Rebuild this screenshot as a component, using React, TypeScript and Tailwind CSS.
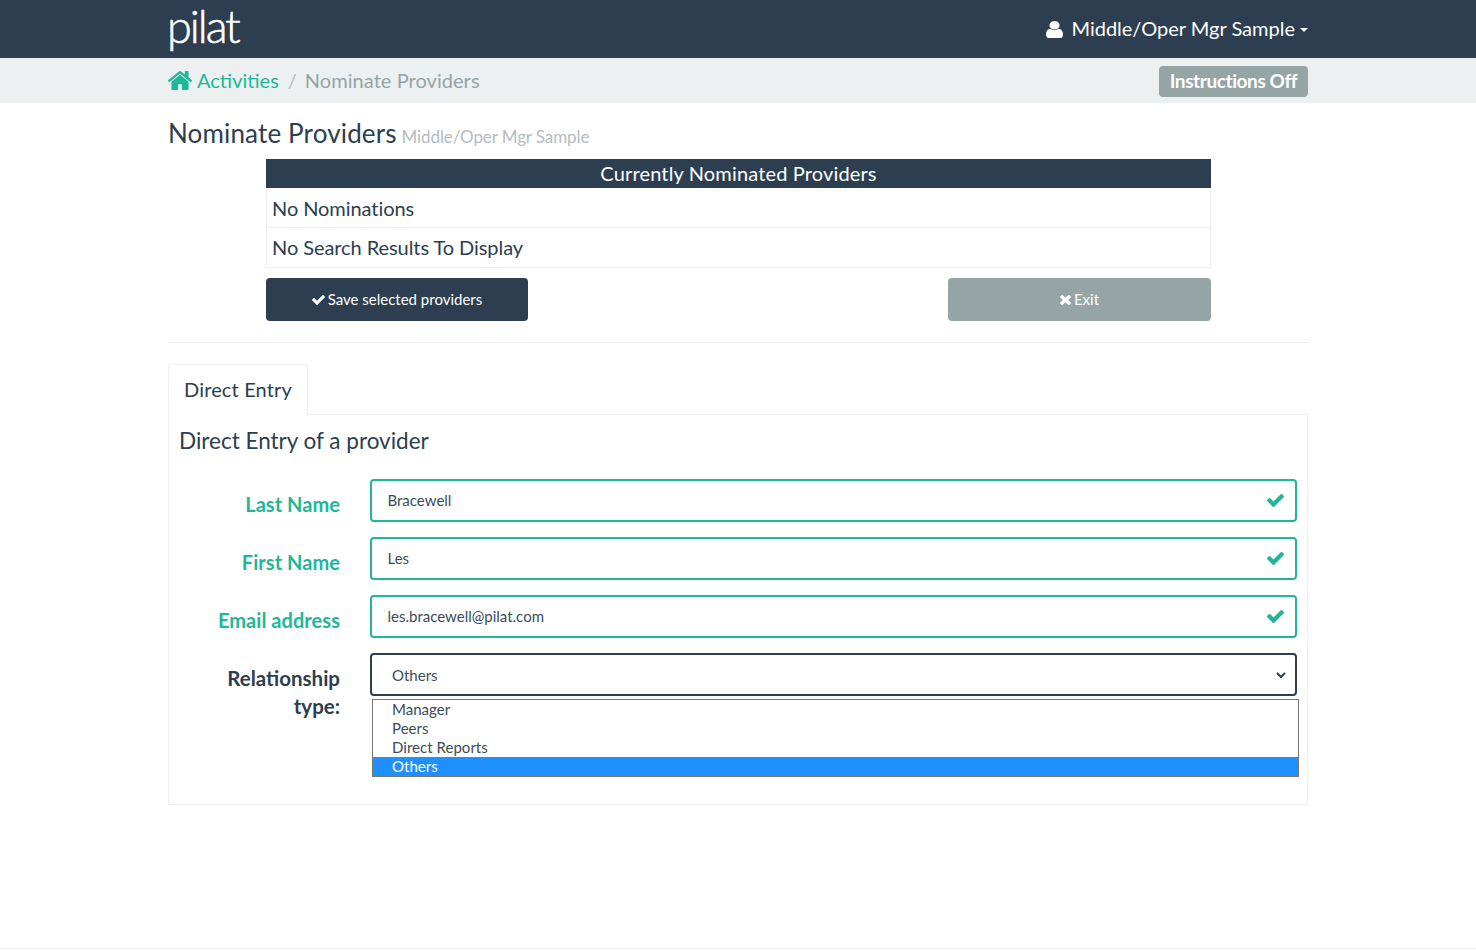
const fields = [
  { label: "Last Name", value: "Bracewell" },
  { label: "First Name", value: "Les" },
  { label: "Email address", value: "les.bracewell@pilat.com" },
]

const options = ["Manager", "Peers", "Direct Reports", "Others"]

function CheckIcon({ className }: { className: string }) {
  return (
    <svg className={className} viewBox="121 334 1550 1188" preserveAspectRatio="none" fill="currentColor">
      <path d="M1671 566q0 40-28 68l-724 724-136 136q-28 28-68 28t-68-28l-136-136-362-362q-28-28-28-68t28-68l136-136q28-28 68-28t68 28l294 295 656-657q28-28 68-28t68 28l136 136q28 28 28 68z" />
    </svg>
  )
}

function TimesIcon({ className }: { className: string }) {
  return (
    <svg className={className} viewBox="302 366 1188 1188" preserveAspectRatio="none" fill="currentColor">
      <path d="M1490 1322q0 40-28 68l-136 136q-28 28-68 28t-68-28l-294-294-294 294q-28 28-68 28t-68-28l-136-136q-28-28-28-68t28-68l294-294-294-294q-28-28-28-68t28-68l136-136q28-28 68-28t68 28l294 294 294-294q28-28 68-28t68 28l136 136q28 28 28 68t-28 68l-294 294 294 294q28 28 28 68z" />
    </svg>
  )
}

function UserIcon({ className }: { className: string }) {
  return (
    <svg className={className} viewBox="256 128 1280 1536" preserveAspectRatio="none" fill="currentColor">
      <path d="M1536 1399q0 109-62.5 187t-150.5 78h-854q-88 0-150.5-78t-62.5-187q0-85 8.5-160.5t31.5-152 58.5-131 94-89 134.5-34.5q131 128 313 128t313-128q76 0 134.5 34.5t94 89 58.5 131 31.5 152 8.5 160.5zm-256-887q0 159-112.5 271.5t-271.5 112.5-271.5-112.5-112.5-271.5 112.5-271.5 271.5-112.5 271.5 112.5 112.5 271.5z" />
    </svg>
  )
}

function HomeIcon({ className }: { className: string }) {
  return (
    <svg className={className} viewBox="90 253 1612 1283" preserveAspectRatio="none" fill="currentColor">
      <path d="M1472 992v480q0 26-19 45t-45 19h-384v-384h-256v384h-384q-26 0-45-19t-19-45v-480q0-1 .5-3t.5-3l575-474 575 474q1 2 1 6zm223-69l-62 74q-8 9-21 11h-3q-13 0-21-7l-692-577-692 577q-12 8-24 7-13-2-21-11l-62-74q-8-10-7-23.5t11-21.5l719-599q32-26 76-26t76 26l244 204v-195q0-14 9-23t23-9h192q14 0 23 9t9 23v408l219 182q10 8 11 21.5t-7 23.5z" />
    </svg>
  )
}

function Field({ label, value }: { label: string; value: string }) {
  return (
    <div className="flex mb-[15px]">
      <label className="w-[161px] pt-[10px] mr-[30px] text-right text-[20px] leading-[30px] font-bold text-[#1fb799] tracking-[0.05px]">
        {label}
      </label>
      <div className="w-[927px] h-[43px] rounded-[4px] border-2 border-[#1fb799] flex items-center justify-between pl-[15.5px] pr-[11px] text-[15px] text-[#3b4b5b]">
        <span>{value}</span>
        <CheckIcon className="w-[17px] h-[13px] text-[#1fb799]" />
      </div>
    </div>
  )
}

export default function App() {
  return (
    <div className="min-h-[950px] bg-white text-[#2c3e50] font-['Lato','Liberation_Sans',sans-serif] flex flex-col">
      <nav className="h-[58px] bg-[#2c3e50] text-white">
        <div className="w-[1140px] mx-auto h-full flex items-center justify-between">
          <span className="text-[45px] font-light leading-none tracking-[-2px] -mt-[5px] -ml-[1px] [-webkit-text-stroke:0.6px_white]">pilat</span>
          <div className="flex items-center text-[20px]">
            <UserIcon className="w-[17px] h-[17px] mr-[8px]" />
            <span className="pb-[2px]">Middle/Oper Mgr Sample</span>
            <span className="ml-[5px] mt-[2px] border-x-[4px] border-t-[4px] border-x-transparent border-t-white" />
          </div>
        </div>
      </nav>

      <div className="h-[45px] bg-[#ecf0f1]">
        <div className="w-[1140px] mx-auto h-full flex items-center justify-between">
          <div className="flex items-center text-[20px]">
            <HomeIcon className="w-[24px] h-[19px] mr-[5px] text-[#1fb799]" />
            <span className="pb-[2px] text-[#1fb799]">Activities</span>
            <span className="pb-[2px] text-[#b4bcc2] ml-[9px] mr-[8px]">/</span>
            <span className="pb-[2px] text-[#95a5a6] tracking-[0.05px]">Nominate Providers</span>
          </div>
          <button className="mt-[1px] w-[149px] h-[31px] rounded-[4px] bg-[#95a5a6] text-white text-[19px] font-bold tracking-[-0.4px]">
            Instructions Off
          </button>
        </div>
      </div>

      <main className="w-[1140px] mx-auto">
        <h1 className="mt-[12px] h-[44px] text-[26px] leading-[36px] tracking-[0.15px]">
          Nominate Providers <small className="-ml-[2px] text-[17px] text-[#b4bcc2] tracking-[-0.1px]">Middle/Oper Mgr Sample</small>
        </h1>

        <div className="mx-[98px] w-[945px]">
          <div className="h-[29px] bg-[#2c3e50] text-white text-center text-[20px] leading-[28px] tracking-[0.15px]">
            Currently Nominated Providers
          </div>
          <div className="border-x border-b border-[#ecf0f1] text-[20px] tracking-[-0.07px]">
            <div className="h-[40px] px-[5px] pt-[1px] flex items-center border-b border-[#ecf0f1]">No Nominations</div>
            <div className="h-[39px] px-[5px] pb-[2px] flex items-center">No Search Results To Display</div>
          </div>
          <div className="mt-[10px] flex justify-between">
            <button className="w-[262px] h-[43px] rounded-[4px] bg-[#2c3e50] text-white text-[15px] flex items-center justify-center gap-[3px]">
              <CheckIcon className="w-[13px] h-[10px]" /> Save selected providers
            </button>
            <button className="w-[263px] h-[43px] rounded-[4px] bg-[#95a5a6] text-white text-[15px] flex items-center justify-center gap-[3px]">
              <TimesIcon className="w-[11px] h-[10px]" /> Exit
            </button>
          </div>
        </div>

        <hr className="mt-[21px] border-[#ecf0f1]" />

        <div className="mt-[21px] w-[140px] h-[51px] pb-[2px] -mb-px relative bg-white border border-b-0 border-[#ecf0f1] rounded-t-[4px] flex items-center justify-center text-[20px] tracking-[0.15px]">
          Direct Entry
        </div>
        <section className="h-[391px] border border-[#ecf0f1] px-[10px]">
          <h3 className="pt-[9px] h-[64px] text-[22.5px] leading-[34px]">Direct Entry of a provider</h3>
          {fields.map((f) => (
            <Field key={f.label} label={f.label} value={f.value} />
          ))}
          <div className="flex">
            <label className="w-[161px] pt-[11px] mr-[30px] text-right text-[20.5px] leading-[28px] font-bold">
              Relationship
              <br />
              type:
            </label>
            <div className="w-[927px]">
              <div className="h-[43px] rounded-[4px] border-2 border-[#2c3e50] flex items-center justify-between pl-[20px] pr-[9px] pt-[1px] text-[15px] text-[#3b4b5b]">
                <span>Others</span>
                <svg width="10" height="7" viewBox="0 0 10 7" fill="none" stroke="#2c3e50" strokeWidth="2">
                  <path d="M1 1l4 4 4-4" />
                </svg>
              </div>
              <ul className="mt-[3px] ml-[2px] w-[927px] border border-[#767676] text-[15px] leading-[19px] tracking-[0.03px] text-[#3b4b5b]">
                {options.map((o) => (
                  <li key={o} className={o === "Others" ? "pl-[19px] bg-[#1e90ff] text-white" : "pl-[19px]"}>
                    {o}
                  </li>
                ))}
              </ul>
            </div>
          </div>
        </section>
      </main>

      <div className="mt-auto mb-[1px] border-t border-[#ecf0f1]" />
    </div>
  )
}
